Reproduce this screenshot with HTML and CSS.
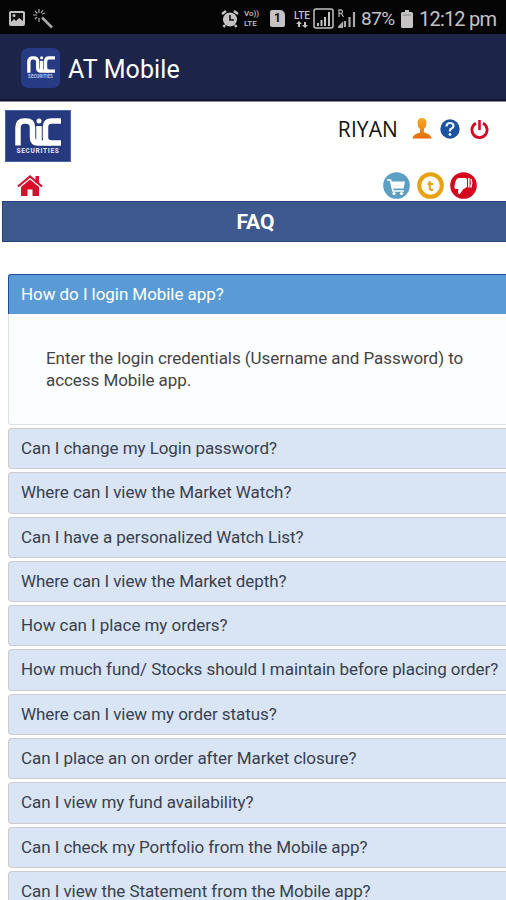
FILE: index.html
```html
<!DOCTYPE html>
<html lang="en">
<head>
    <meta charset="UTF-8">
    <meta name="viewport" content="width=device-width, initial-scale=1.0">
    <title>AT Mobile</title>
    <link rel="stylesheet" href="styles.css">
</head>
<body>
    <!-- Shared logo lettering -->
    <svg width="0" height="0" class="defs">
        <symbol id="nic" viewBox="0 0 46 28">
            <g fill="none" stroke="#fff" stroke-width="5.500">
                <path d="M3 27.500V9.500Q3 3 9.500 3H11Q17.500 3 17.500 9.500V19Q17.500 25 23 25H46"/>
                <path d="M24 8V25"/>
                <path d="M46 3H36.500Q30.500 3 30.500 9V19.500Q30.500 25 36 25"/>
            </g>
            <circle cx="24" cy="3" r="2.500" fill="#fff"/>
        </symbol>
    </svg>

    <div class="status-bar">
        <div class="status-left">
            <svg width="18" height="17" viewBox="0 0 18 17"><rect x="1" y="1" width="16" height="15" rx="2" fill="#c4c2c2"/><path d="M3 3H15V11L11 8 8 11 6 9 3 12Z" fill="#111"/><circle cx="6" cy="5.500" r="1.500" fill="#c4c2c2"/></svg>
            <svg width="21" height="20" viewBox="0 0 21 20"><path d="M9 8.500L19 18.500" stroke="#aaa" stroke-width="2.500"/><path d="M6 0V4M6 9V13M0 6H4M9 5L12 4M2 2L4.500 4.500M10 1L8 4M2 10L4 8" stroke="#aaa" stroke-width="1.200"/></svg>
        </div>
        <div class="status-right">
            <svg class="alarm" width="18" height="18" viewBox="0 0 18 18"><circle cx="9" cy="9.500" r="7" fill="#c4c2c2"/><path d="M1 4L5 1M13 1L17 4M4 15L2.500 17M14 15L15.500 17" stroke="#c4c2c2" stroke-width="2.500"/><path d="M9 5V10H13" fill="none" stroke="#111" stroke-width="1.600"/></svg>
            <div class="volte"><span>Vo))</span><span>LTE</span></div>
            <div class="sim">1</div>
            <div class="lte"><span>LTE</span><svg width="12" height="7" viewBox="0 0 12 7"><path d="M0 3L3 0 6 3H4V6H2V3ZM6 4H8V1H10V4H12L9 7Z" fill="#c4c2c2"/></svg></div>
            <svg class="signal" width="21" height="21" viewBox="0 0 21 21"><rect x="1" y="1" width="19" height="19" rx="2" fill="none" stroke="#c4c2c2" stroke-width="1.500"/><path d="M5 18V15M8.500 18V12M12 18V9M16 18V4" stroke="#c4c2c2" stroke-width="2"/></svg>
            <svg class="roaming" width="18" height="19" viewBox="0 0 18 19"><path d="M1 8V1H3.500Q5.500 2.500 3.500 4.500H1M3.500 4.500L5.500 8" fill="none" stroke="#aaa" stroke-width="1.300"/><path d="M1 18L4 15V18ZM7 18V12M11.500 18V8M16 18V3" stroke="#aaa" stroke-width="2.200" fill="#aaa"/></svg>
            <span class="percent">87%</span>
            <svg class="battery" width="12" height="18" viewBox="0 0 12 18"><path d="M4 0H8V2H10.500Q12 2 12 3.500V16.500Q12 18 10.500 18H1.500Q0 18 0 16.500V3.500Q0 2 1.500 2H4Z" fill="#c4c2c2"/><path d="M2 5H10" stroke="#888"/></svg>
            <span class="time">12:12 pm</span>
        </div>
    </div>

    <div class="app-bar">
        <div class="app-icon">
            <svg width="28" height="17"><use href="#nic"/></svg>
            <span>SECURITIES</span>
        </div>
        <span class="app-title">AT Mobile</span>
    </div>

    <div class="header">
        <div class="logo">
            <svg width="46" height="28"><use href="#nic"/></svg>
            <span>SECURITIES</span>
        </div>
        <div class="user">
            <span class="user-name">RIYAN</span>
            <svg class="person" width="20" height="21" viewBox="0 0 20 21"><defs><linearGradient id="skin" x2="0" y2="1"><stop offset="0" stop-color="#f5ae1c"/><stop offset="1" stop-color="#e96b0c"/></linearGradient></defs><path d="M10 0Q14.500 0 14.500 5Q14.500 9 12 11V14.500Q19 16 19.500 20.500H0.500Q1 16 8 14.500V11Q5.500 9 5.500 5Q5.500 0 10 0Z" fill="url(#skin)"/></svg>
            <svg class="help" width="20" height="20" viewBox="0 0 20 20"><circle cx="10" cy="10" r="9.700" fill="#1c52a0"/><path d="M6.500 7.500Q6.500 4 10 4T13.500 7Q13.500 8.500 11.500 9.500T10 12.500" fill="none" stroke="#e8f0fa" stroke-width="2.200"/><circle cx="10" cy="15.500" r="1.400" fill="#e8f0fa"/></svg>
            <svg width="19" height="19" viewBox="0 0 19 19"><path d="M6 3.200A7.600 7.600 0 1 0 13 3.200" fill="none" stroke="#d20c26" stroke-width="2.800"/><path d="M9.500 0V10" stroke="#d20c26" stroke-width="2.600"/></svg>
        </div>
    </div>

    <div class="nav">
        <svg class="home" width="26" height="22" viewBox="0 0 26 22"><path d="M18.500 1H22V8H18.500Z" fill="#d8102c"/><path d="M1 11.500L13 1.500 25 11.500" fill="none" stroke="#d8102c" stroke-width="2.200"/><path d="M4 12L13 4.500 22 12V21H15.500V14.500H10.500V21H4Z" fill="#d8102c"/></svg>
        <div class="actions">
            <svg width="27" height="27" viewBox="0 0 27 27"><circle cx="13.500" cy="13.500" r="13.300" fill="#5b9fc5"/><path d="M4 8H7.500L10 19H21" fill="none" stroke="#fff" stroke-width="1.700"/><path d="M7.500 9.500H22L20.500 16.500H9.500Z" fill="#fff"/><circle cx="11" cy="21.500" r="1.600" fill="#fff"/><circle cx="18.500" cy="21.500" r="1.600" fill="#fff"/></svg>
            <svg width="27" height="27" viewBox="0 0 27 27"><circle cx="13.500" cy="13.500" r="11.300" fill="#fff" stroke="#e9a10d" stroke-width="4"/><path d="M12.700 9V16Q12.700 18 14.500 18H16M10.500 12H16" fill="none" stroke="#e9a10d" stroke-width="2"/></svg>
            <svg width="27" height="27" viewBox="0 0 27 27"><circle cx="13.500" cy="13.500" r="13.300" fill="#d5061f"/><path d="M8.500 6H15.500Q17 6 17 7.500V15L13 17.500 9.500 22.500Q7 21 8.500 17H5.500Q3.500 16 5 12Q5.500 7 8.500 6Z" fill="#fff"/><path d="M18.800 6V15.500M21 7Q22.500 11 20.800 15.500" fill="none" stroke="#fff" stroke-width="1.500"/></svg>
        </div>
    </div>

    <h1 class="page-title">FAQ</h1>

    <div class="faq">
        <div class="faq-open">
            <div class="question">How do I login Mobile app?</div>
            <div class="answer">Enter the login credentials (Username and Password) to access Mobile app.</div>
        </div>
        <div class="faq-item">Can I change my Login password?</div>
        <div class="faq-item">Where can I view the Market Watch?</div>
        <div class="faq-item">Can I have a personalized Watch List?</div>
        <div class="faq-item">Where can I view the Market depth?</div>
        <div class="faq-item">How can I place my orders?</div>
        <div class="faq-item">How much fund/ Stocks should I maintain before placing order?</div>
        <div class="faq-item">Where can I view my order status?</div>
        <div class="faq-item">Can I place an on order after Market closure?</div>
        <div class="faq-item">Can I view my fund availability?</div>
        <div class="faq-item">Can I check my Portfolio from the Mobile app?</div>
        <div class="faq-item">Can I view the Statement from the Mobile app?</div>
    </div>
</body>
</html>
```
FILE: styles.css
```css
* {
    box-sizing: border-box;
}
body {
    margin: 0;
    width: 506px;
    height: 900px;
    overflow: hidden;
    background: #fff;
    font-family: Roboto, sans-serif;
}
svg {
    display: block;
    flex-shrink: 0;
}
.defs {
    display: none;
}
.status-bar {
    display: flex;
    justify-content: space-between;
    height: 34px;
    padding: 3px 9px 0 8px;
    background: #050505;
    color: #c4c2c2;
}
.status-left {
    display: flex;
    align-items: center;
    gap: 7px;
}
.status-right {
    display: flex;
    align-items: center;
}
.volte {
    display: flex;
    flex-direction: column;
    width: 17px;
    margin-left: 5px;
    font-size: 8px;
    line-height: 10px;
    font-weight: 500;
}
.sim {
    width: 15px;
    height: 17px;
    margin-left: 9px;
    border-radius: 2px 5px 2px 2px;
    background: #c4c2c2;
    color: #111;
    font-size: 12px;
    font-weight: bold;
    line-height: 17px;
    text-align: center;
}
.lte {
    display: flex;
    flex-direction: column;
    align-items: center;
    width: 18px;
    margin-left: 8px;
    font-size: 10px;
    font-weight: 500;
    line-height: 11px;
}
.signal {
    margin-left: 2px;
}
.roaming {
    margin-left: 4px;
}
.percent {
    width: 34px;
    margin-left: 5px;
    font-size: 19px;
    letter-spacing: -0.5px;
}
.battery {
    margin-left: 6px;
}
.time {
    width: 78px;
    margin-left: 6px;
    font-size: 20px;
    letter-spacing: -0.8px;
    white-space: nowrap;
}
.app-bar {
    display: flex;
    align-items: center;
    height: 68px;
    padding: 1px 21px 0;
    background: #1d2449;
    border-bottom: 1px solid #8f8a92;
    box-shadow: inset 0 -2px #11143a;
}
.app-icon {
    display: flex;
    flex-direction: column;
    align-items: center;
    width: 39px;
    height: 40px;
    padding-top: 8px;
    border-radius: 7px;
    background: #273b85;
}
.app-icon span {
    margin-top: 1px;
    color: #b5c6ee;
    font-size: 4.5px;
    font-weight: bold;
    line-height: 5px;
}
.app-title {
    margin-left: 8px;
    padding-top: 2px;
    color: #fff;
    font-size: 25px;
    letter-spacing: 0.1px;
}
.header {
    display: flex;
    justify-content: space-between;
    align-items: flex-start;
    height: 70px;
    padding: 8px 17px 0 5px;
}
.logo {
    display: flex;
    flex-direction: column;
    align-items: center;
    width: 66px;
    height: 52px;
    padding-top: 7px;
    background: #26397f;
    border: 1px solid #4567a8;
}
.logo span {
    margin-top: 1px;
    color: #d5dcf0;
    font-size: 6.5px;
    font-weight: 900;
    line-height: 8px;
    letter-spacing: 0.7px;
}
.user {
    display: flex;
    align-items: center;
    padding-top: 7px;
}
.user-name {
    font-family: "Open Sans", sans-serif;
    font-size: 21px;
    line-height: 24px;
    letter-spacing: 0.1px;
    color: #111;
}
.person {
    margin: 0 8px 2px 14px;
}
.help {
    margin-right: 10px;
}
.nav {
    display: flex;
    justify-content: space-between;
    height: 29px;
    padding: 0 29px 0 17px;
}
.home {
    margin-top: 3px;
}
.actions {
    display: flex;
    gap: 6.5px;
}
.page-title {
    height: 41px;
    margin: 0 0 0 2px;
    padding-left: 2px;
    background: #3e598e;
    border: solid #2d3f7d;
    border-width: 1px 0 1px 1px;
    color: #fff;
    font-size: 21px;
    font-weight: bold;
    line-height: 40px;
    text-align: center;
}
.faq {
    display: flex;
    flex-direction: column;
    gap: 3px;
    padding: 32px 0 0 8px;
    font-size: 17px;
    letter-spacing: -0.06px;
    white-space: nowrap;
}
.question {
    height: 40px;
    padding-left: 12px;
    background: #5b9bd5;
    border: solid #1f4da0;
    border-width: 1px 0 0 1px;
    border-radius: 3px 0 0 0;
    color: #fff;
    line-height: 39px;
}
.answer {
    height: 111px;
    padding: 33px 30px 0 37px;
    background: #fcfdfe;
    border: solid #e2dfdf;
    border-width: 0 0 1px 1px;
    border-radius: 0 0 0 3px;
    color: #444;
    line-height: 22px;
    white-space: normal;
}
.faq-item {
    flex-shrink: 0;
    height: 41.3px;
    padding-left: 12px;
    background: #d9e5f5;
    border: 1px solid #d0cbcf;
    border-right: 0;
    border-radius: 4px 0 0 4px;
    color: #39404d;
    line-height: 39.5px;
}
```
